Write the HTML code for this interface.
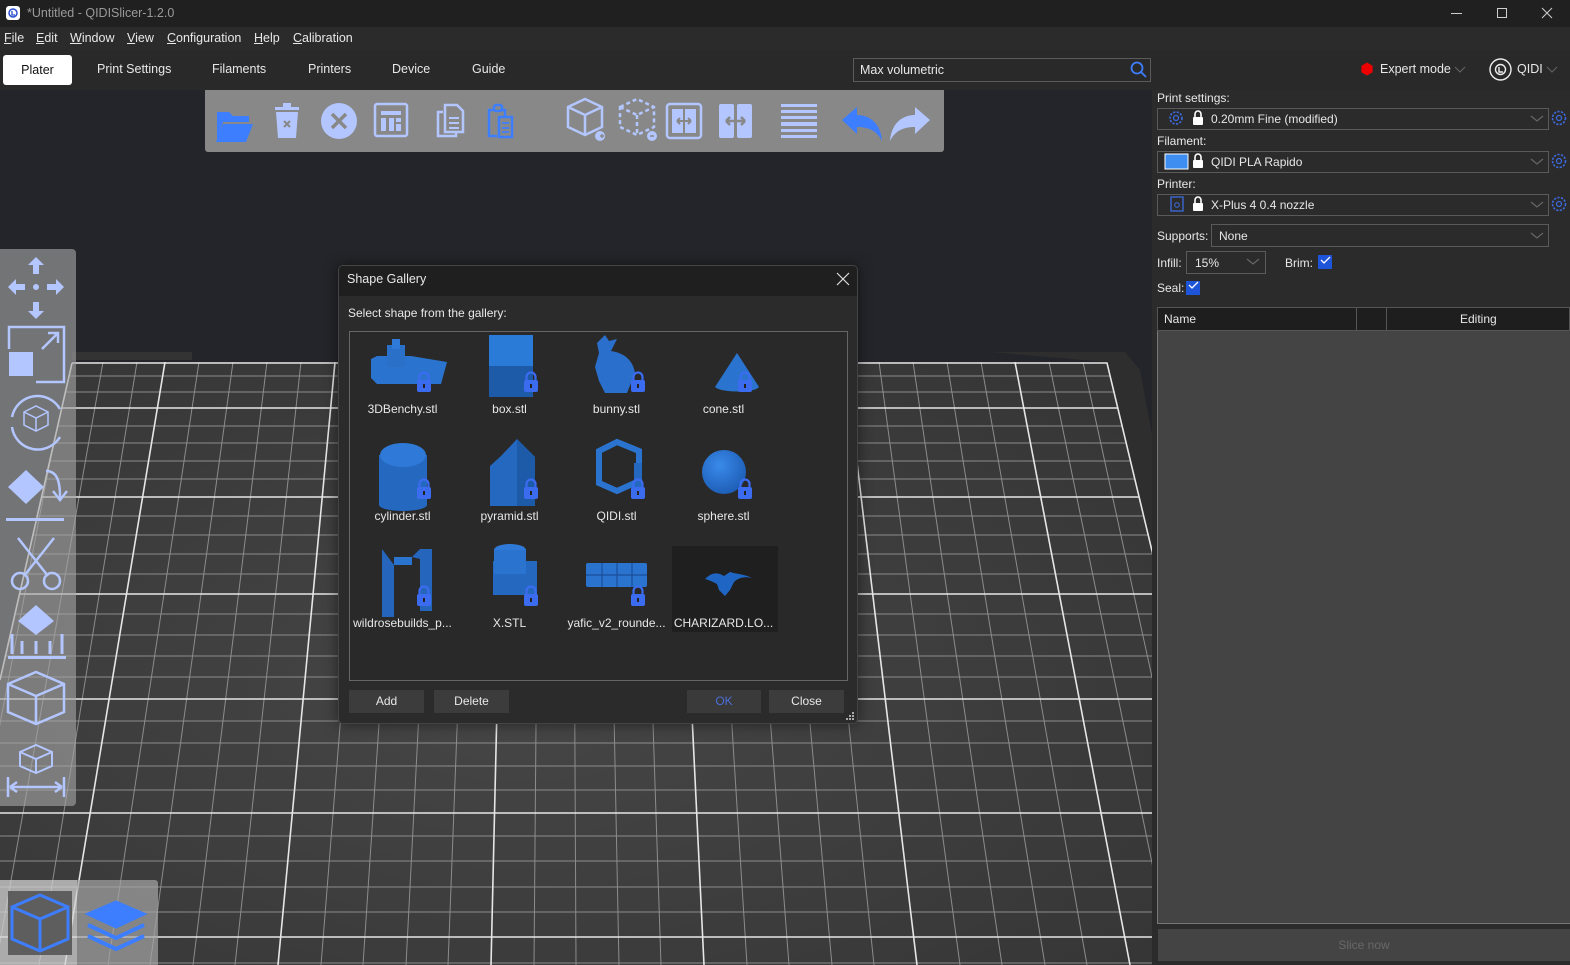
<!DOCTYPE html>
<html><head><meta charset="utf-8"><style>
*{margin:0;padding:0;box-sizing:border-box}
body{width:1570px;height:965px;overflow:hidden;background:#24252a;font-family:"Liberation Sans",sans-serif;font-size:12px;color:#e8e8e8;position:relative}
.a{position:absolute}
.t{position:absolute;white-space:nowrap}
u{text-decoration:underline}
.combo{position:absolute;border:1px solid #5a5a5a;background:#2b2b2b;height:22px}
.btn{position:absolute;background:#3c3c3c;height:23px;text-align:center;line-height:23px;color:#e8e8e8}
.lbl{position:absolute;width:107px;text-align:center;color:#e8e8e8;font-size:12px}
</style></head><body>

<svg class="a" style="left:0;top:0" width="1570" height="965">
<defs>
<radialGradient id="bg" cx="0.45" cy="0.55" r="0.7">
<stop offset="0" stop-color="#464646"/><stop offset="1" stop-color="#363636"/></radialGradient>
<clipPath id="bc"><polygon points="72,362 1107,362 1153,555 1153,965 0,965 0,680"/></clipPath>
</defs>
<polygon points="72,352 192,352 192,360 72,360" fill="#333"/>
<polygon points="990,352 1125,352 1140,370 1153,440 1153,555 1107,362" fill="#2e2e2e"/>
<polygon points="72,362 1107,362 1153,555 1153,965 0,965 0,680" fill="url(#bg)"/>
<g clip-path="url(#bc)" stroke="#8c8c8c" stroke-width="1">
<line x1="0" y1="376" x2="1160" y2="376"/>
<line x1="0" y1="392" x2="1160" y2="392"/>
<line x1="0" y1="426" x2="1160" y2="426"/>
<line x1="0" y1="443" x2="1160" y2="443"/>
<line x1="0" y1="461" x2="1160" y2="461"/>
<line x1="0" y1="479" x2="1160" y2="479"/>
<line x1="0" y1="516" x2="1160" y2="516"/>
<line x1="0" y1="535" x2="1160" y2="535"/>
<line x1="0" y1="554" x2="1160" y2="554"/>
<line x1="0" y1="574" x2="1160" y2="574"/>
<line x1="0" y1="614" x2="1160" y2="614"/>
<line x1="0" y1="635" x2="1160" y2="635"/>
<line x1="0" y1="656" x2="1160" y2="656"/>
<line x1="0" y1="677" x2="1160" y2="677"/>
<line x1="0" y1="721" x2="1160" y2="721"/>
<line x1="0" y1="743" x2="1160" y2="743"/>
<line x1="0" y1="766" x2="1160" y2="766"/>
<line x1="0" y1="790" x2="1160" y2="790"/>
<line x1="0" y1="836" x2="1160" y2="836"/>
<line x1="0" y1="861" x2="1160" y2="861"/>
<line x1="0" y1="887" x2="1160" y2="887"/>
<line x1="0" y1="912" x2="1160" y2="912"/>
<line x1="0" y1="963" x2="1160" y2="963"/>
<line x1="69" y1="362" x2="-46" y2="965"/>
<line x1="103" y1="362" x2="-4" y2="965"/>
<line x1="137" y1="362" x2="39" y2="965"/>
<line x1="199" y1="362" x2="108" y2="965"/>
<line x1="233" y1="362" x2="150" y2="965"/>
<line x1="267" y1="362" x2="193" y2="965"/>
<line x1="301" y1="362" x2="235" y2="965"/>
<line x1="369" y1="362" x2="321" y2="965"/>
<line x1="403" y1="362" x2="363" y2="965"/>
<line x1="437" y1="362" x2="406" y2="965"/>
<line x1="471" y1="362" x2="448" y2="965"/>
<line x1="539" y1="362" x2="534" y2="965"/>
<line x1="573" y1="362" x2="576" y2="965"/>
<line x1="607" y1="362" x2="619" y2="965"/>
<line x1="641" y1="362" x2="661" y2="965"/>
<line x1="709" y1="362" x2="747" y2="965"/>
<line x1="743" y1="362" x2="789" y2="965"/>
<line x1="777" y1="362" x2="832" y2="965"/>
<line x1="811" y1="362" x2="874" y2="965"/>
<line x1="879" y1="362" x2="960" y2="965"/>
<line x1="913" y1="362" x2="1002" y2="965"/>
<line x1="947" y1="362" x2="1045" y2="965"/>
<line x1="981" y1="362" x2="1087" y2="965"/>
<line x1="1049" y1="362" x2="1173" y2="965"/>
<line x1="1083" y1="362" x2="1215" y2="965"/>
</g>
<g clip-path="url(#bc)" stroke="#e6e6e6" stroke-width="1.6">
<line x1="0" y1="408" x2="1160" y2="408"/>
<line x1="0" y1="497" x2="1160" y2="497"/>
<line x1="0" y1="594" x2="1160" y2="594"/>
<line x1="0" y1="699" x2="1160" y2="699"/>
<line x1="0" y1="813" x2="1160" y2="813"/>
<line x1="0" y1="937" x2="1160" y2="937"/>
<line x1="165" y1="362" x2="65" y2="965"/>
<line x1="335" y1="362" x2="278" y2="965"/>
<line x1="505" y1="362" x2="491" y2="965"/>
<line x1="675" y1="362" x2="704" y2="965"/>
<line x1="845" y1="362" x2="917" y2="965"/>
<line x1="1015" y1="362" x2="1130" y2="965"/>
</g>
<polyline points="72,363 1107,363 1153,555" fill="none" stroke="#e6e6e6" stroke-width="1.6"/>
<line x1="72" y1="363" x2="0" y2="680" stroke="#e6e6e6" stroke-width="1.6"/>
</svg>

<div class="a" style="left:0;top:0;width:1570px;height:27px;background:#202020"></div>
<div class="a" style="left:6px;top:6px;width:14px;height:14px;background:#fff;border-radius:3px"></div>
<svg class="a" style="left:6px;top:6px" width="14" height="14"><circle cx="7" cy="7" r="4" fill="none" stroke="#2a4fd0" stroke-width="1.5"/><path d="M6 5v4h3" fill="none" stroke="#2a4fd0" stroke-width="1.3"/></svg>
<div class="t" style="left:27px;top:6px;color:#9a9a9a;font-size:12.5px">*Untitled - QIDISlicer-1.2.0</div>
<svg class="a" style="left:1445px;top:5px" width="120" height="16" stroke="#cfcfcf" fill="none" stroke-width="1"><line x1="6" y1="8.5" x2="17" y2="8.5"/><rect x="52.5" y="3.5" width="9" height="9"/><path d="M97 3l10 10M107 3l-10 10"/></svg>

<div class="a" style="left:0;top:27px;width:1570px;height:23px;background:#2b2b2b"></div>
<div class="t" style="left:4px;top:31px;font-size:12.5px"><u>F</u>ile</div>
<div class="t" style="left:36px;top:31px;font-size:12.5px"><u>E</u>dit</div>
<div class="t" style="left:70px;top:31px;font-size:12.5px"><u>W</u>indow</div>
<div class="t" style="left:127px;top:31px;font-size:12.5px"><u>V</u>iew</div>
<div class="t" style="left:167px;top:31px;font-size:12.5px"><u>C</u>onfiguration</div>
<div class="t" style="left:254px;top:31px;font-size:12.5px"><u>H</u>elp</div>
<div class="t" style="left:293px;top:31px;font-size:12.5px"><u>C</u>alibration</div>

<div class="a" style="left:0;top:50px;width:1570px;height:40px;background:#292929"></div>
<div class="a" style="left:3px;top:55px;width:69px;height:30px;background:#fff;border-radius:3px;color:#111;text-align:center;line-height:30px;font-size:12.5px">Plater</div>
<div class="t" style="left:97px;top:62px;font-size:12.5px">Print Settings</div>
<div class="t" style="left:212px;top:62px;font-size:12.5px">Filaments</div>
<div class="t" style="left:308px;top:62px;font-size:12.5px">Printers</div>
<div class="t" style="left:392px;top:62px;font-size:12.5px">Device</div>
<div class="t" style="left:472px;top:62px;font-size:12.5px">Guide</div>
<div class="a" style="left:853px;top:58px;width:298px;height:24px;border:1px solid #5a5a5a;background:#292929"></div>
<div class="t" style="left:860px;top:63px;font-size:12.5px">Max volumetric</div>
<svg class="a" style="left:1130px;top:61px" width="18" height="18" fill="none" stroke="#3d7eff" stroke-width="1.8"><circle cx="7" cy="7" r="5.5"/><line x1="11" y1="11" x2="16" y2="16"/></svg>
<svg class="a" style="left:1360px;top:62px" width="14" height="14"><polygon points="7,0.5 12.6,3.7 12.6,10.3 7,13.5 1.4,10.3 1.4,3.7" fill="#e00"/></svg>
<div class="t" style="left:1380px;top:62px;font-size:12.5px">Expert mode</div>
<svg class="a" style="left:1454px;top:66px" width="12" height="8"><path d="M1 1l5 5 5-5" stroke="#666" fill="none"/></svg>
<svg class="a" style="left:1489px;top:58px" width="23" height="23" fill="none" stroke="#eee" stroke-width="1.4"><circle cx="11.5" cy="11.5" r="10.5"/><circle cx="11.5" cy="11.5" r="5"/><path d="M10 9v5h4"/></svg>
<div class="t" style="left:1517px;top:62px;font-size:12.5px">QIDI</div>
<svg class="a" style="left:1546px;top:66px" width="12" height="8"><path d="M1 1l5 5 5-5" stroke="#666" fill="none"/></svg>

<div class="a" style="left:205px;top:90px;width:739px;height:62px;background:#888;border-radius:0 0 3px 3px"></div>
<svg class="a" style="left:205px;top:90px" width="739" height="62">
<g fill="#b3c6ff" stroke="none">
<path d="M12 22h12l4 4h16v6H18l-6 20z" fill="#3d7eff"/><path d="M18 34h30l-7 18H11z" fill="#3d7eff"/>
<rect x="70" y="17" width="24" height="3"/><rect x="78" y="13" width="8" height="4"/><path d="M71 22h22l-2 26H73z"/>
<circle cx="134" cy="31" r="18"/>
</g>
<path d="M79 31l6 6M85 31l-6 6" stroke="#888" stroke-width="2"/>
<path d="M127 24l14 14M141 24l-14 14" stroke="#888" stroke-width="3.5"/>
<g fill="none" stroke="#b3c6ff" stroke-width="2.5">
<rect x="170" y="14" width="32" height="32" rx="2"/>
<path d="M238 22h-5v24h18v-4" /><path d="M240 15h12l6 6v21h-18z"/>
<path d="M363 17l17 -8 17 8v20l-17 8-17-8z M363 17l17 8 17-8 M380 25v20"/>
<path d="M415 17l17-8 17 8v20l-17 8-17-8z M415 17l17 8 17-8 M432 25v20" stroke-dasharray="4 3"/>
<rect x="462" y="14" width="34" height="34" rx="3"/>
</g>
<g fill="#b3c6ff">
<rect x="176" y="21" width="20" height="4"/><rect x="176" y="28" width="5" height="13"/><rect x="184" y="28" width="5" height="13"/><rect x="191" y="28" width="5" height="4"/><rect x="191" y="34" width="5" height="7"/>
<rect x="244" y="27" width="10" height="2"/><rect x="244" y="32" width="10" height="2"/><rect x="244" y="37" width="10" height="2"/>
<circle cx="395" cy="46" r="5"/><circle cx="447" cy="46" r="5"/>
<rect x="467" y="19" width="11" height="24"/><rect x="480" y="19" width="11" height="24"/>
<rect x="514" y="14" width="15" height="34" rx="2"/><rect x="532" y="14" width="15" height="34" rx="2"/>
<rect x="576" y="14" width="36" height="3"/><rect x="576" y="20" width="36" height="3"/><rect x="576" y="26" width="36" height="3"/><rect x="576" y="32" width="36" height="4"/><rect x="576" y="39" width="36" height="3"/><rect x="576" y="45" width="36" height="3"/>
<path d="M725 30l-15-13v8c-14 0-24 10-25 26 5-10 13-14 25-14v7z"/>
</g>
<path d="M637 30l15-13v8c14 0 24 10 25 26-5-10-13-14-25-14v7z" fill="#3d7eff"/>
<g fill="none" stroke="#3d7eff" stroke-width="2.5">
<path d="M295 20h5v6M289 20h-5v26h8"/><rect x="289" y="15" width="8" height="6" rx="2"/>
<rect x="294" y="27" width="13" height="20"/>
</g>
<path d="M297 33h7M297 38h7M297 42h7" stroke="#3d7eff" stroke-width="1.8"/>
<path d="M397 44v4M395 46h4M445 46h4" stroke="#888" stroke-width="1.5"/>
<path d="M472 31h14M472 31l3-3M472 31l3 3M486 31l-3-3M486 31l-3 3" stroke="#888" stroke-width="2" fill="none"/>
<path d="M521 31h19M521 31l4-4M521 31l4 4M540 31l-4-4M540 31l-4 4" stroke="#888" stroke-width="2.5" fill="none"/>
</svg>

<div class="a" style="left:0;top:249px;width:76px;height:557px;background:rgba(165,165,165,0.62);border-radius:0 4px 4px 0"></div>
<svg class="a" style="left:0;top:249px" width="76" height="557">
<g fill="#b3c6ff">
<path d="M36 8l8 8h-5v9h-6v-9h-5z"/><path d="M36 70l8-8h-5v-9h-6v9h-5z"/><path d="M8 38l8-8v5h9v6h-9v5z"/><path d="M64 38l-8-8v5h-9v6h9v5z"/><circle cx="36" cy="38" r="3"/>
<rect x="9" y="103" width="24" height="24"/>
<path d="M8 238l18-17 18 17-18 17z"/>
<rect x="6" y="269" width="58" height="3"/>
<path d="M18 372l18-16 18 16-18 14z"/>
<rect x="8" y="407" width="58" height="3"/>
</g>
<g fill="none" stroke="#b3c6ff" stroke-width="2.5">
<path d="M9 100v-22h55v55h-28"/><path d="M42 100l16-16M48 84h10v10"/>
<path d="M60 160a26 26 0 0 0-48 8M12 178a26 26 0 0 0 48 10"/>
<path d="M24 163l12-6 12 6v13l-12 6-12-6z M24 163l12 6 12-6 M36 169v13" stroke-width="1.5"/>
<path d="M46 222c10 0 14 8 14 26M53 242l7 9 7-9"/>
<path d="M18 289l30 38M54 289l-30 38"/><circle cx="20" cy="332" r="8"/><circle cx="52" cy="332" r="8"/>
<path d="M12 385v20M22 392v13M36 392v13M50 392v13M62 385v20" stroke-width="3"/>
<path d="M8 435l28-12 28 12v28l-28 12-28-12z M8 435l28 12 28-12 M36 447v28"/>
<path d="M20 503l16-7 16 7v14l-16 7-16-7z M20 503l16 7 16-7 M36 510v14" stroke-width="2"/>
<path d="M8 528v20M64 528v20M10 538h52M10 538l7-5M10 538l7 5M62 538l-7-5M62 538l-7 5"/>
</g>
</svg>

<div class="a" style="left:0;top:880px;width:77px;height:85px;background:rgba(210,210,210,0.75)"></div>
<div class="a" style="left:77px;top:880px;width:81px;height:85px;background:rgba(165,165,165,0.7);border-radius:0 3px 0 0"></div>
<div class="a" style="left:8px;top:891px;width:64px;height:64px;background:#5e5e5e"></div>
<svg class="a" style="left:0;top:880px" width="160" height="85" fill="none" stroke="#3d7eff" stroke-width="3">
<path d="M12 27l28-12 28 12v32l-28 12-28-12z M12 27l28 12 28-12 M40 39v32"/>
<path d="M88 34l28-12 28 12-28 13z" fill="#3d7eff"/>
<path d="M88 45l28 13 28-13M88 56l28 13 28-13" stroke-width="4"/>
</svg>

<div class="a" style="left:1152px;top:90px;width:418px;height:875px;background:#2b2b2b"></div>
<div class="t" style="left:1157px;top:91px;font-size:12px">Print settings:</div>
<div class="combo" style="left:1157px;top:108px;width:392px"></div>
<div class="t" style="left:1157px;top:134px">Filament:</div>
<div class="combo" style="left:1157px;top:151px;width:392px"></div>
<div class="t" style="left:1157px;top:177px">Printer:</div>
<div class="combo" style="left:1157px;top:194px;width:392px"></div>
<div class="t" style="left:1157px;top:229px">Supports:</div>
<div class="combo" style="left:1211px;top:224px;width:338px;height:23px"></div>
<div class="t" style="left:1219px;top:229px">None</div>
<div class="t" style="left:1157px;top:256px">Infill:</div>
<div class="combo" style="left:1186px;top:251px;width:80px;height:23px"></div>
<div class="t" style="left:1195px;top:256px">15%</div>
<div class="t" style="left:1285px;top:256px">Brim:</div>
<div class="a" style="left:1318px;top:255px;width:14px;height:14px;background:#1e55d8"></div>
<div class="t" style="left:1157px;top:281px">Seal:</div>
<div class="a" style="left:1186px;top:281px;width:14px;height:14px;background:#1e55d8"></div>
<svg class="a" style="left:1150px;top:100px" width="420" height="200">
<g fill="none" stroke="#666" stroke-width="1.2"><path d="M381 16l6 5 6-5M381 59l6 5 6-5M381 102l6 5 6-5M381 133l6 5 6-5M97 159l6 5 6-5"/></g>
<g fill="none" stroke="#fff" stroke-width="1.3"><path d="M171 160l3 3 6-6M39 185l3 3 6-6"/></g>
<g fill="none" stroke="#3d6bdf" stroke-width="1.6" stroke-dasharray="2.2 1.4"><circle cx="26" cy="18" r="6"/><circle cx="409" cy="18" r="6.5"/><circle cx="409" cy="61" r="6.5"/><circle cx="409" cy="104" r="6.5"/></g>
<g fill="none" stroke="#3d6bdf" stroke-width="1.2"><circle cx="26" cy="18" r="2.5"/><circle cx="409" cy="18" r="2.5"/><circle cx="409" cy="61" r="2.5"/><circle cx="409" cy="104" r="2.5"/></g>
<rect x="15" y="54" width="23" height="15" fill="#3d8ef0" stroke="#fff" stroke-width="1"/>
<rect x="21" y="97" width="12" height="14" fill="none" stroke="#3d6bdf" stroke-width="1.3"/><circle cx="27" cy="105" r="2.3" fill="none" stroke="#3d6bdf"/>
<g fill="#fff"><rect x="43" y="17" width="10" height="8" rx="1"/><rect x="43" y="60" width="10" height="8" rx="1"/><rect x="43" y="103" width="10" height="8" rx="1"/></g>
<g fill="none" stroke="#fff" stroke-width="1.6"><path d="M45 17v-3a3 3 0 0 1 6 0v3M45 60v-3a3 3 0 0 1 6 0v3M45 103v-3a3 3 0 0 1 6 0v3"/></g>
</svg>
<div class="t" style="left:1211px;top:112px">0.20mm Fine (modified)</div>
<div class="t" style="left:1211px;top:155px">QIDI PLA Rapido</div>
<div class="t" style="left:1211px;top:198px">X-Plus 4 0.4 nozzle</div>
<div class="a" style="left:1157px;top:307px;width:413px;height:617px;background:#444;border:1px solid #777;border-right:none"></div>
<div class="a" style="left:1157px;top:307px;width:413px;height:24px;background:#1e1e1e;border:1px solid #555"></div>
<div class="a" style="left:1356px;top:307px;width:1px;height:24px;background:#555"></div>
<div class="a" style="left:1386px;top:307px;width:1px;height:24px;background:#555"></div>
<div class="t" style="left:1164px;top:312px">Name</div>
<div class="t" style="left:1460px;top:312px">Editing</div>
<div class="a" style="left:1158px;top:929px;width:412px;height:32px;background:#444;color:#686868;text-align:center;line-height:32px">Slice now</div>

<div class="a" style="left:338px;top:265px;width:520px;height:459px;background:#2b2b2b;border:1px solid #444;border-radius:5px;box-shadow:0 0 14px rgba(0,0,0,0.5);overflow:hidden">
<div class="a" style="left:0;top:0;width:520px;height:30px;background:#1f1f1f"></div>
</div>
<div class="t" style="left:347px;top:272px;font-size:12.5px">Shape Gallery</div>
<svg class="a" style="left:836px;top:272px" width="14" height="14"><path d="M1 1l12 12M13 1L1 13" stroke="#ddd" stroke-width="1.2"/></svg>
<div class="t" style="left:348px;top:306px">Select shape from the gallery:</div>
<div class="a" style="left:349px;top:331px;width:499px;height:350px;background:#292929;border:1px solid #666"></div>
<div class="a" style="left:672px;top:546px;width:106px;height:86px;background:#1f1f1f"></div>

<svg class="a" style="left:349px;top:331px" width="499" height="300">
<defs><radialGradient id="sp" cx="0.4" cy="0.35" r="0.65"><stop offset="0" stop-color="#3a8aea"/><stop offset="1" stop-color="#1e5fb8"/></radialGradient>
<g id="lk"><rect x="-7" y="-3" width="14" height="12" rx="2" fill="#3b6cf0"/><path d="M-4.5 -3v-3a4.5 4.5 0 0 1 9 0v3" fill="none" stroke="#3b6cf0" stroke-width="2.2"/><rect x="-1" y="1" width="2" height="4" fill="#222"/></g></defs>
<g fill="#2a74d0">
<path d="M22 28l6-3h34l36 6-6 22H28l-6-6z"/><rect x="38" y="14" width="18" height="22" fill="#2a6fc8"/><rect x="43" y="8" width="8" height="10" fill="#2f7ad8"/>
<rect x="140" y="4" width="44" height="31" fill="#2a7ad8"/><rect x="140" y="35" width="44" height="31" fill="#1d5aa8"/>
<path d="M248 12l8-8 4 6 8-2-6 12c14 2 22 10 24 22l-8 20h-22l-6-12-4-14 4-14z" fill="#2a6fcc"/>
<path d="M374 56c0-12 8-20 14-32 6 12 14 20 14 32z"/><path d="M388 22l-22 34c6 6 40 6 44 0z" fill="#2a74d0"/>
</g>
<g fill="#2a74d0">
<rect x="30" y="124" width="48" height="50" fill="#2468c0"/><ellipse cx="54" cy="124" rx="23" ry="12" fill="#2f7ad8"/><ellipse cx="54" cy="174" rx="24" ry="6" fill="#2468c0"/>
<path d="M152 125l16-17 18 18v49h-45v-40z" fill="#2468c0"/><path d="M168 108l18 18v49h-18z" fill="#1d5aa8"/>
<path d="M250 120l18-9 22 9v30l-22 10-18-8z" fill="none" stroke="#2a74d0" stroke-width="6"/><rect x="285" y="132" width="8" height="24" fill="#2468c0"/>
<circle cx="375" cy="141" r="22" fill="url(#sp)"/>
</g>
<g fill="#2a74d0">
<path d="M33 218l12 16v52H33z" fill="#2565bb"/><rect x="45" y="226" width="18" height="8" fill="#2a74d0"/><path d="M63 226l8-8h12v62H71v-52z" fill="#2565bb"/>
<rect x="144" y="230" width="44" height="34" fill="#2468c0"/><ellipse cx="161" cy="219" rx="16" ry="6" fill="#2f7ad8"/><rect x="145" y="219" width="32" height="24" fill="#2a74d0"/>
<rect x="237" y="232" width="61" height="24" rx="2" fill="#2a74d0"/>
<path d="M253 232v24M268 232v24M283 232v24M237 244h61" stroke="#1a4e9a" stroke-width="1.2"/>
<path d="M356 248c8-8 14-6 19 -3l6-4c6 2 14 2 22 6-8-2-14 0-18 4l-4 8-5 6-6-6-2-6c-4-2-8-4-12-5z" fill="#1f66c4"/>
</g>
<use href="#lk" x="75" y="52"/><use href="#lk" x="182" y="52"/><use href="#lk" x="289" y="52"/><use href="#lk" x="396" y="52"/>
<use href="#lk" x="75" y="159"/><use href="#lk" x="182" y="159"/><use href="#lk" x="289" y="159"/><use href="#lk" x="396" y="159"/>
<use href="#lk" x="75" y="266"/><use href="#lk" x="182" y="266"/><use href="#lk" x="289" y="266"/>
</svg>
<div class="lbl" style="left:349px;top:402px">3DBenchy.stl</div>
<div class="lbl" style="left:456px;top:402px">box.stl</div>
<div class="lbl" style="left:563px;top:402px">bunny.stl</div>
<div class="lbl" style="left:670px;top:402px">cone.stl</div>
<div class="lbl" style="left:349px;top:509px">cylinder.stl</div>
<div class="lbl" style="left:456px;top:509px">pyramid.stl</div>
<div class="lbl" style="left:563px;top:509px">QIDI.stl</div>
<div class="lbl" style="left:670px;top:509px">sphere.stl</div>
<div class="lbl" style="left:349px;top:616px">wildrosebuilds_p...</div>
<div class="lbl" style="left:456px;top:616px">X.STL</div>
<div class="lbl" style="left:563px;top:616px">yafic_v2_rounde...</div>
<div class="lbl" style="left:670px;top:616px">CHARIZARD.LO...</div>

<div class="btn" style="left:349px;top:690px;width:75px">Add</div>
<div class="btn" style="left:434px;top:690px;width:75px">Delete</div>
<div class="btn" style="left:687px;top:690px;width:74px;color:#4a6fd8;background:#3a3a3a">OK</div>
<div class="btn" style="left:769px;top:690px;width:75px">Close</div>
<svg class="a" style="left:846px;top:712px" width="9" height="9" fill="#aaa"><rect x="6" y="0" width="2" height="2"/><rect x="3" y="3" width="2" height="2"/><rect x="6" y="3" width="2" height="2"/><rect x="0" y="6" width="2" height="2"/><rect x="3" y="6" width="2" height="2"/><rect x="6" y="6" width="2" height="2"/></svg>
</body></html>
